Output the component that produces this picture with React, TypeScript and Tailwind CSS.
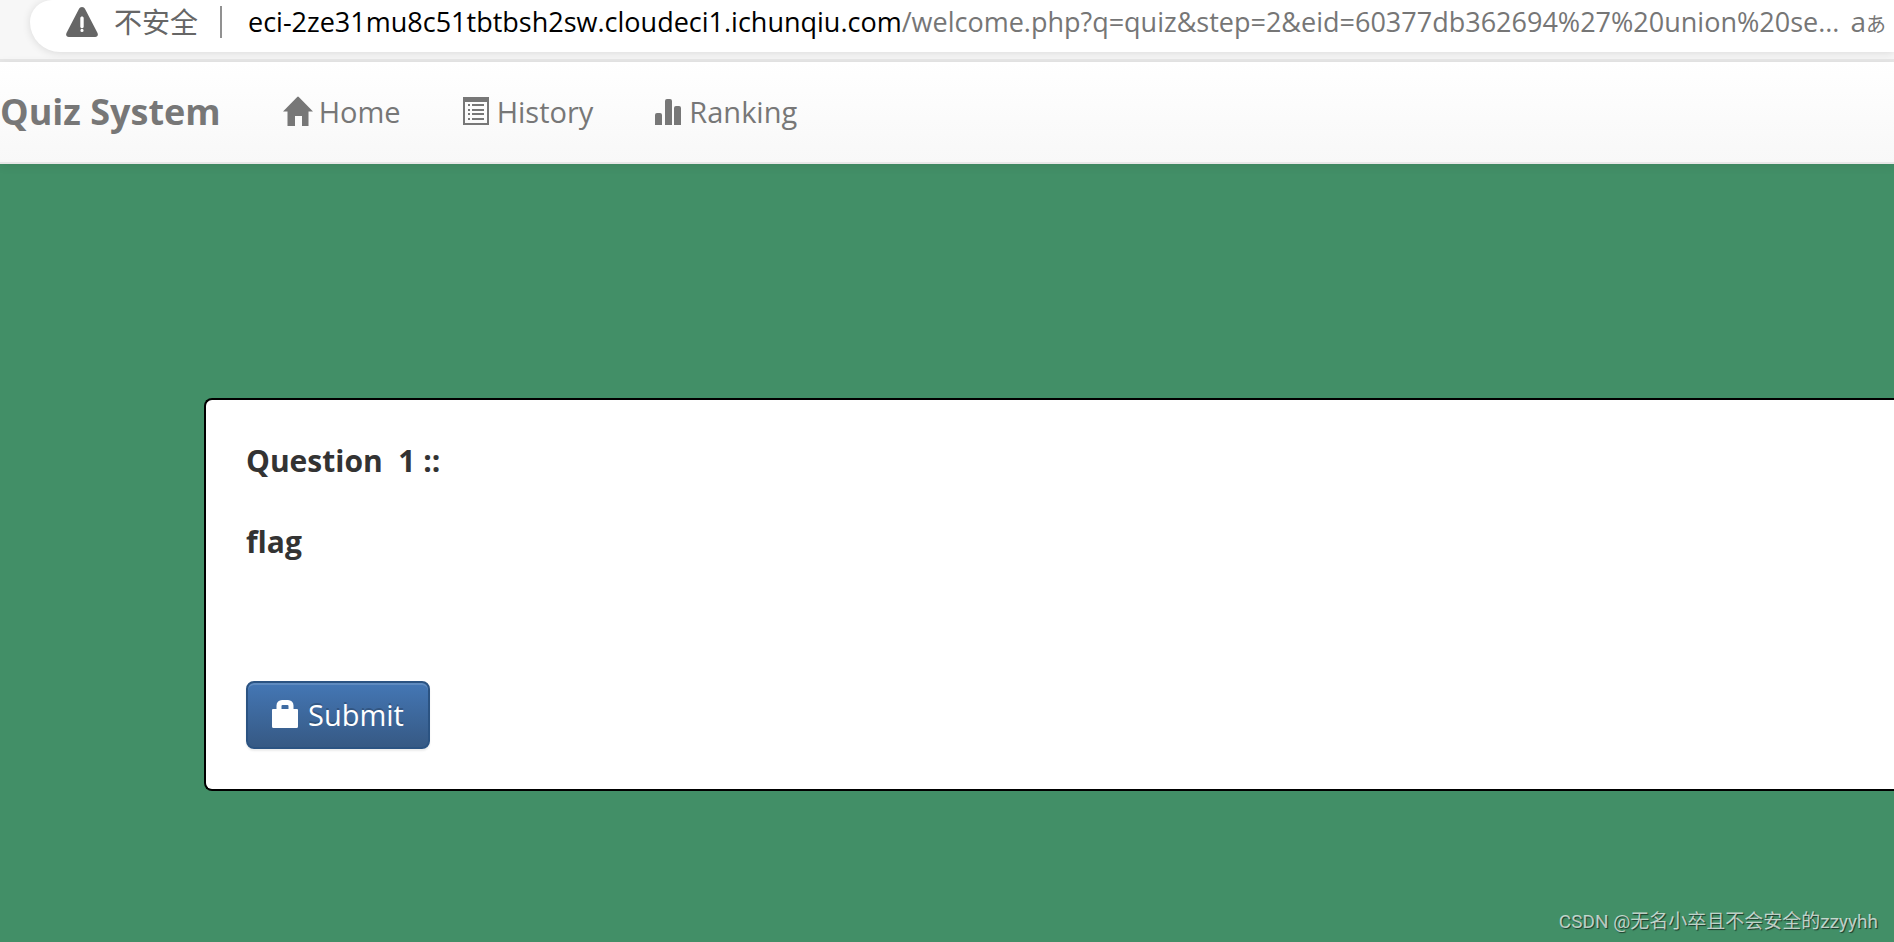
import React from 'react';

interface IconProps {
  className?: string;
}

const WarningIcon: React.FC<IconProps> = ({ className }) => (
  <svg viewBox="0 0 32 30" className={className} fill="currentColor" aria-hidden="true">
    <path
      fillRule="evenodd"
      d="M16 0c1.400 0 2.400.8 3.200 2.200l12.200 23.600c1.200 2.400 0 4.200-2.200 4.200H2.800C.6 30-.6 28.200.6 25.800L12.800 2.200C13.600.8 14.600 0 16 0Zm0 9.500c-1 0-1.700.7-1.700 1.700v8.300c0 1 .7 1.700 1.700 1.700s1.700-.7 1.700-1.700v-8.300c0-1-.7-1.700-1.700-1.700Zm0 12.300a1.600 1.600 0 1 0 0 3.200 1.600 1.600 0 0 0 0-3.200Z"
    />
  </svg>
);

const HomeIcon: React.FC<IconProps> = ({ className }) => (
  <svg viewBox="0 0 30 30" className={className} fill="currentColor" aria-hidden="true">
    <path d="M14.200.9a1.100 1.100 0 0 1 1.600 0L30 15.500h-4.500V30H19v-10h-7V30H4.500V15.500H0Z" />
  </svg>
);

const ListIcon: React.FC<IconProps> = ({ className }) => (
  <svg viewBox="0 0 26 28" className={className} fill="currentColor" aria-hidden="true">
    <path fillRule="evenodd" d="M0 0h26v28H0ZM2 5v21h22V5Z" />
    <path d="M5 7h2v2H5zM5 12h2v2H5zM5 16h2v2H5zM5 21h2v2H5z" />
    <path d="M9 7h12v2H9zM9 12h12v2H9zM9 16h12v2H9zM9 21h12v2H9z" />
  </svg>
);

const StatsIcon: React.FC<IconProps> = ({ className }) => (
  <svg viewBox="0 0 26 26" className={className} fill="currentColor" aria-hidden="true">
    <path d="M0 26V16a2 2 0 0 1 2-2h3a2 2 0 0 1 2 2v10ZM10 26V2a2 2 0 0 1 2-2h3a2 2 0 0 1 2 2v24ZM19 26V9a2 2 0 0 1 2-2h3a2 2 0 0 1 2 2v17Z" />
  </svg>
);

const LockIcon: React.FC<IconProps> = ({ className }) => (
  <svg viewBox="0 0 26 28" className={className} fill="currentColor" aria-hidden="true">
    <path
      fillRule="evenodd"
      d="M4.500 9V5.500A5.500 5.500 0 0 1 10 0h6a5.500 5.500 0 0 1 5.500 5.500V9H25a1 1 0 0 1 1 1v16.500a1.500 1.500 0 0 1-1.500 1.500h-23A1.500 1.500 0 0 1 0 26.500V10a1 1 0 0 1 1-1Zm5 0h7V6a1 1 0 0 0-1-1h-5a1 1 0 0 0-1 1Z"
    />
  </svg>
);

const AddressBar: React.FC = () => (
  <div className="bg-[#f7f7f7] pb-[7px] border-b-[3px] border-[#e7e7e7] overflow-hidden">
    <div className="ml-[30px] h-[52px] flex items-center bg-white rounded-bl-[30px] rounded-tl-[22px] pl-9 pr-2 pb-2 shadow-[0_1px_8px_rgba(0,0,0,0.12)] whitespace-nowrap">
      <WarningIcon className="w-8 h-[30px] shrink-0 text-[#666666]" />
      <span className="ml-4 text-[28px] text-[#666666]">不安全</span>
      <span className="ml-[22px] w-[2px] h-8 shrink-0 bg-[#919191]"></span>
      <span className="ml-[26px] text-[27px] text-[#767676]">
        <span className="text-black">eci-2ze31mu8c51tbtbsh2sw.cloudeci1.ichunqiu.com</span>
        /welcome.php?q=quiz&amp;step=2&amp;eid=60377db362694%27%20union%20se...
      </span>
      <button type="button" className="ml-auto flex items-baseline leading-8 text-[#767676]">
        <span className="text-[28px]">a</span>
        <span className="text-xl">あ</span>
      </button>
    </div>
  </div>
);

const Navbar: React.FC = () => (
  <nav className="h-[102px] flex items-center bg-gradient-to-b from-white to-[#f8f8f8] border-b-2 border-[#e7e7e7] text-[#777777] text-[29px] shadow-[0_2px_10px_rgba(0,0,0,0.075)]">
    <a href="#" className="text-4xl font-bold">Quiz System</a>
    <div className="ml-[62px] flex items-center gap-[62px]">
      <a href="#home" className="flex items-center gap-[6px]">
        <HomeIcon className="w-[30px] h-[30px] mb-[2px]" />
        Home
      </a>
      <a href="#history" className="flex items-center gap-2">
        <ListIcon className="w-[26px] h-7 mb-[2px]" />
        History
      </a>
      <a href="#ranking" className="flex items-center gap-2">
        <StatsIcon className="w-[26px] h-[26px]" />
        Ranking
      </a>
    </div>
  </nav>
);

const QuestionPanel: React.FC = () => (
  <form
    className="ml-[204px] bg-white border-2 border-r-0 border-black rounded-l-lg p-10 text-[#333333]"
    onSubmit={(e) => e.preventDefault()}
  >
    <div className="text-[30px] leading-[42px] font-bold">
      <p className="whitespace-pre">Question  1 ::</p>
      <p className="mt-[39px]">flag</p>
    </div>
    <button
      type="submit"
      className="mt-[118px] h-[68px] px-6 flex items-center gap-[10px] rounded-lg border-2 border-[#2b5382] bg-gradient-to-b from-[#4477b5] to-[#365984] text-white text-[29px] [text-shadow:0_-2px_0_rgba(0,0,0,0.2)] shadow-[inset_0_2px_0_rgba(255,255,255,0.15),0_2px_2px_rgba(0,0,0,0.08)]"
    >
      <LockIcon className="w-[26px] h-7 mb-[2px]" />
      Submit
    </button>
  </form>
);

const App: React.FC = () => {
  return (
    <div className="min-h-screen flex flex-col bg-[#428f67] overflow-hidden font-['Open_Sans','Noto_Sans_CJK_SC',sans-serif]">
      <AddressBar />
      <Navbar />
      <main className="pt-[234px]">
        <QuestionPanel />
      </main>
      <footer className="mt-auto px-4 pb-[6px] text-right text-[19px] leading-7 text-white/70 font-['Roboto','Noto_Sans_CJK_SC',sans-serif] [text-shadow:1px_1px_1px_rgba(0,0,0,0.6)]">
        CSDN @无名小卒且不会安全的zzyyhh
      </footer>
    </div>
  );
};

export default App;
